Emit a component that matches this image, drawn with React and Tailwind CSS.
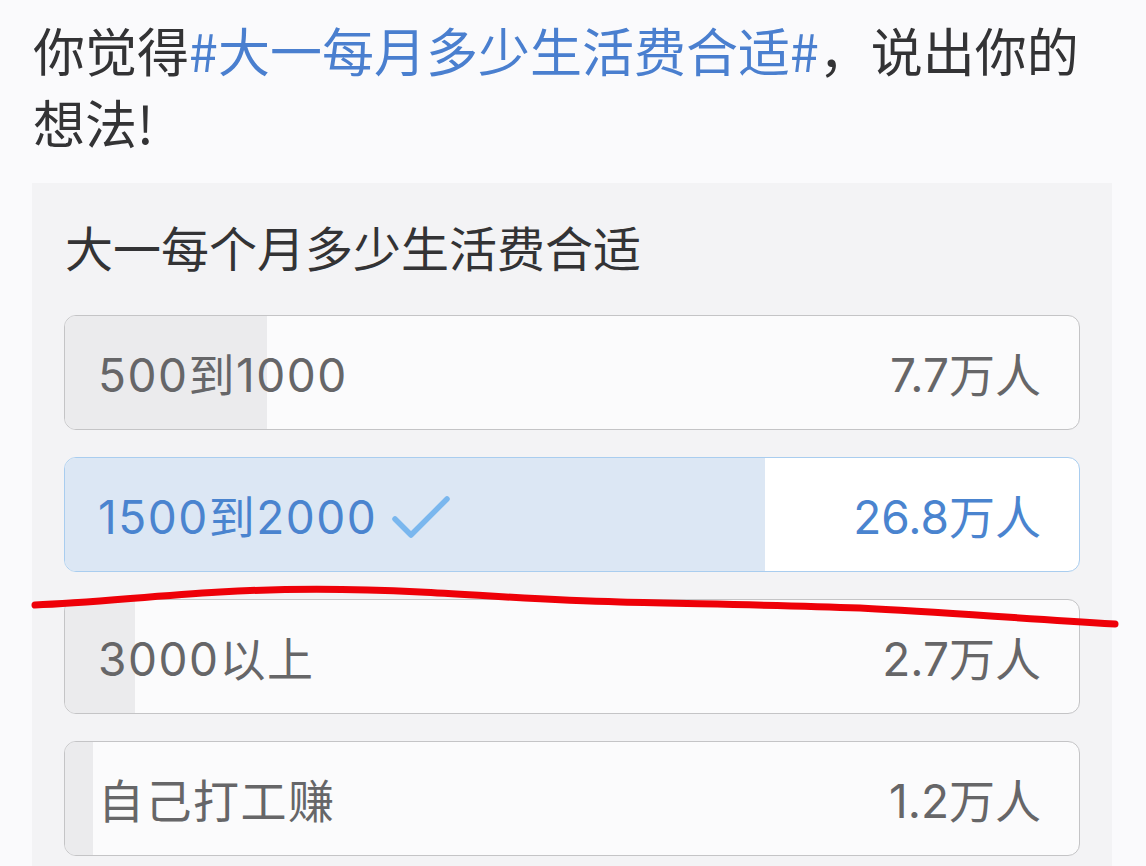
import React from "react";

const font = { fontFamily: '"Noto Sans CJK SC", "Noto Sans", sans-serif' };
const optFont = { fontFamily: 'Inter, "Noto Sans CJK SC", sans-serif' };

const options = [
  { label: "500到1000", count: "7.7万人", pct: 19.9, selected: false },
  { label: "1500到2000", count: "26.8万人", pct: 69, selected: true },
  { label: "3000以上", count: "2.7万人", pct: 6.9, selected: false },
  { label: "自己打工赚", count: "1.2万人", pct: 2.8, selected: false },
];

function Check() {
  return (
    <svg width="60" height="46" viewBox="0 0 60 46" className="ml-[14px]">
      <path d="M4 24 L20 40 L56 4" fill="none" stroke="#7ab7ee" strokeWidth="5.5" strokeLinecap="round" strokeLinejoin="round" />
    </svg>
  );
}

function Option({ o }) {
  return (
    <div
      className={
        "relative h-[115px] rounded-[12px] overflow-hidden border-[1.5px] " +
        (o.selected ? "border-[#a9cdef] bg-white" : "border-[#c4c4c6] bg-[#fbfbfc]")
      }
    >
      <div
        className={"absolute left-0 top-0 bottom-0 " + (o.selected ? "bg-[#dce7f4]" : "bg-[#ebebed]")}
        style={{ width: o.pct + "%" }}
      />
      <div className="relative h-full flex items-center justify-between pl-[33px] pr-[38px] pt-[6px]" style={optFont}>
        <div className={"flex items-center text-[46px] " + (o.selected ? "text-[#4a84cf]" : "text-[#666668]")}>
          <span className="tracking-[1.5px]">{o.label}</span>
          {o.selected && <Check />}
        </div>
        <span className={"text-[46px] " + (o.selected ? "text-[#4a84cf]" : "text-[#666668]")}>{o.count}</span>
      </div>
    </div>
  );
}

export default function App() {
  return (
    <div className="relative w-[1146px] h-[866px] overflow-hidden bg-[#fafafc]" style={font}>
      <div className="pl-[33px] pr-[20px] pt-[14px] text-[52px] leading-[72px] text-[#333335]">
        你觉得<span className="text-[#4a7fcf]">#大一每月多少生活费合适#</span>，说出你的
        <br />
        想法!
      </div>
      <div className="mt-[25px] ml-[32px] w-[1080px] h-[700px] bg-[#f3f3f5] px-[32px] pt-[35px]">
        <div className="text-[48px] leading-[56px] text-[#333335] pl-[1px]">大一每个月多少生活费合适</div>
        <div className="mt-[41px] flex flex-col gap-[27px]">
          {options.map((o) => (
            <Option key={o.label} o={o} />
          ))}
        </div>
      </div>
      <svg className="absolute left-0 top-0 pointer-events-none" width="1146" height="866">
        <path
          d="M35 605 C 90 603, 150 596, 220 592 C 290 588, 360 589, 420 592 C 480 595, 540 600, 620 602 C 700 604, 780 605, 860 608 C 940 612, 1000 617, 1115 624"
          fill="none"
          stroke="#ee0008"
          strokeWidth="7"
          strokeLinecap="round"
        />
      </svg>
    </div>
  );
}
